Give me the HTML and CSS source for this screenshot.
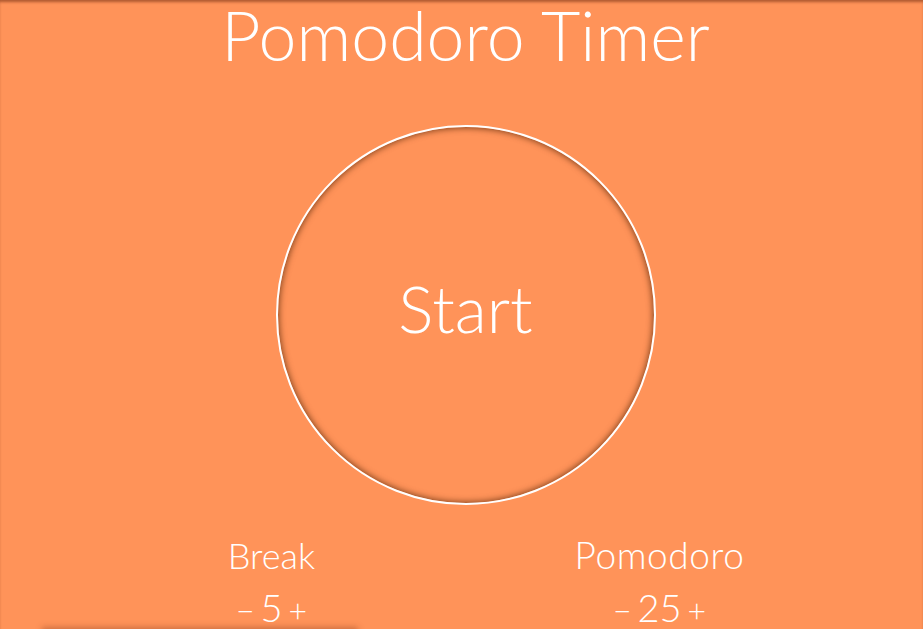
FILE: index.html
```html
<!DOCTYPE html>
<html>
<head>
<meta charset="utf-8">
<link rel="stylesheet" href="styles.css">
<title>Pomodoro Timer</title>
</head>
<body>
<div class="page">
  <h1 class="title">Pomodoro Timer</h1>
  <div class="dial-wrap">
    <div class="dial"><span class="dial-text">Start</span></div>
  </div>
  <div class="settings">
    <div class="setting">
      <div class="setting-label">Break</div>
      <div class="setting-ctrl"><span class="btn">−</span><span class="value">5</span><span class="btn">+</span></div>
    </div>
    <div class="setting">
      <div class="setting-label label-wide">Pomodoro</div>
      <div class="setting-ctrl"><span class="btn">−</span><span class="value">25</span><span class="btn">+</span></div>
    </div>
  </div>
  <div class="panel"></div>
</div>
</body>
</html>
```
FILE: styles.css
```css
html, body {
  margin: 0;
  padding: 0;
  height: 100%;
  overflow: hidden;
}
body {
  background: #ff9359;
  color: #fff;
  font-family: Lato, "Open Sans", sans-serif;
  font-weight: 300;
  box-shadow: inset 0 3px 3px -1px rgba(120, 50, 20, 0.6);
}
.page {
  display: flex;
  flex-direction: column;
  align-items: center;
  padding-left: 8px;
}
.title {
  margin: 0;
  font-size: 68px;
  font-weight: 300;
  line-height: 70px;
  letter-spacing: 0;
}
.dial-wrap {
  margin-top: 55px;
}
.dial {
  width: 376px;
  height: 376px;
  border: 2px solid #fff;
  border-radius: 50%;
  box-shadow: inset 0 0 6px 1px rgba(90, 40, 10, 0.75);
  display: flex;
  align-items: center;
  justify-content: center;
}
.dial-text {
  font-size: 66px;
  line-height: 1;
  margin-top: -14px;
}
.settings {
  display: flex;
  gap: 0;
  margin-top: 28px;
}
.setting {
  width: 388px;
  display: flex;
  flex-direction: column;
  align-items: center;
}
.setting-label {
  font-size: 36px;
  line-height: 44px;
}
.label-wide {
  letter-spacing: 0.6px;
  font-size: 37px;
}
.setting-ctrl {
  display: flex;
  align-items: baseline;
  gap: 6px;
  margin-top: 10px;
}
.btn {
  font-size: 32px;
}
.value {
  font-size: 38px;
  line-height: 40px;
}
.panel {
  align-self: flex-start;
  margin-left: 34px;
  width: 316px;
  height: 40px;
  box-shadow: 0 -2px 6px rgba(120, 50, 20, 0.35);
}
```
